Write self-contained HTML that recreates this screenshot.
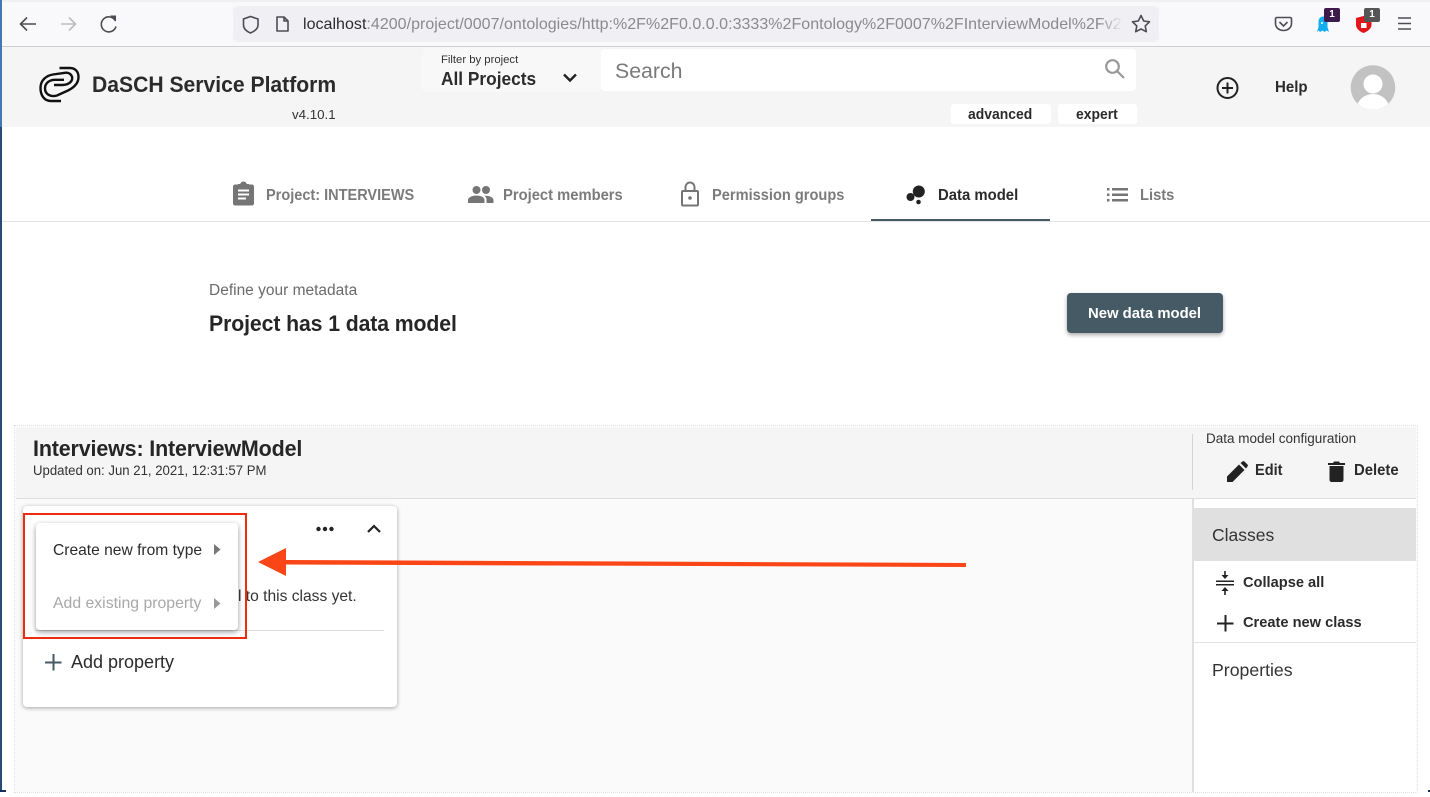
<!DOCTYPE html>
<html>
<head>
<meta charset="utf-8">
<style>
html,body{margin:0;padding:0;width:1430px;height:797px;overflow:hidden;background:#fff;font-family:"Liberation Sans",sans-serif;color:#222}
.a{position:absolute;white-space:nowrap;transform-origin:left center}
svg{position:absolute;overflow:visible}
#root{position:absolute;left:0;top:0;width:1430px;height:797px;overflow:hidden;background:#fff}
.tab{font-size:15.5px;font-weight:700;color:#7b7b7b;line-height:20px}
</style>
</head>
<body>
<div id="root">
<!-- browser chrome -->
<div class="a" style="left:0;top:0;width:1430px;height:46px;background:#f9f9fb;border-bottom:1px solid #cfcfd3"></div>
<div class="a" style="left:0;top:0;width:1430px;height:2px;background:#f0f0f3"></div>
<div class="a" style="left:233px;top:6px;width:926px;height:36px;background:#f0f0f4;border-radius:5px"></div>
<svg style="left:0;top:0" width="1430" height="46" fill="none" stroke="#4c4c52" stroke-width="1.6">
<path d="M36 24H21M27 17.5L20.5 24L27 30.5"/>
<path d="M76 24H61M69 17.5L75.5 24L69 30.5" stroke="#bdbdc1"/>
<path d="M115.500 21A7.500 7.500 0 1 0 116 26.500"/><path d="M110 15.500L116 15.500V21.500Z" fill="#4c4c52" stroke="none"/>
<path d="M250.500 16.500L258 19V25C258 29 254 31.500 250.500 33C247 31.500 243.500 29 243.500 25V19Z"/>
<path d="M277 17H284L288 21V31H277ZM284 17V21H288" stroke-linejoin="round"/>
<path d="M1141 15.500L1143.700 21L1149.500 21.800L1145.200 25.900L1146.300 31.700L1141 29L1135.700 31.700L1136.800 25.900L1132.500 21.800L1138.300 21Z" stroke-linejoin="round"/>
<path d="M1277 17.500H1290C1291 17.500 1291.500 18 1291.500 19V23.500C1291.500 27.500 1288 30.500 1283.500 30.500C1279 30.500 1275.500 27.500 1275.500 23.500V19C1275.500 18 1276 17.500 1277 17.500ZM1279.500 22L1283.500 26L1287.500 22"/>
<path d="M1398 18H1411M1398 23.500H1411M1398 29H1411" stroke-width="1.500"/>
<path d="M1317 32L1318.500 27V22C1318.500 18.500 1320.500 16.500 1323 16.500C1325.500 16.500 1327.500 18.500 1327.500 22V27L1329 32L1326.500 30.500L1324.500 32L1322.500 30.500L1320 32L1318.800 30.500Z" fill="#12aef0" stroke="none"/>
<circle cx="1322" cy="23" r="1" fill="#fff" stroke="none"/>
<path d="M1363.500 16L1371.500 18V25C1371.500 28.500 1367.500 31.500 1363.500 33C1359.500 31.500 1356 28.500 1356 25V18Z" fill="#e2141c" stroke="none"/>
<rect x="1361" y="23" width="5.500" height="5" fill="#fff" stroke="none"/>
</svg>
<div class="a" style="left:1324px;top:8px;width:16px;height:14px;background:#3d1a4c;border-radius:2px;color:#fff;font-size:10px;font-weight:700;text-align:center;line-height:14px">1</div>
<div class="a" style="left:1364px;top:8px;width:16px;height:14px;background:#555;border-radius:2px;color:#fff;font-size:10px;font-weight:700;text-align:center;line-height:14px">1</div>
<div class="a" style="left:303px;top:15px;width:818px;overflow:hidden;font-size:16px;line-height:20px;color:#8a8a8f;letter-spacing:0.03px"><span style="color:#2b2b30">localhost</span>:4200/project/0007/ontologies/http:%2F%2F0.0.0.0:3333%2Fontology%2F0007%2FInterviewModel%2Fv2</div>
<div class="a" style="left:1099px;top:12px;width:24px;height:26px;background:linear-gradient(to right,rgba(240,240,244,0),#f0f0f4)"></div>

<!-- app header -->
<div class="a" style="left:2px;top:47px;width:1428px;height:80px;background:#f5f5f5"></div>
<svg style="left:31px;top:60px" width="60" height="50" viewBox="0 0 60 50" fill="none" stroke="#111" stroke-width="2.400">
<path d="M30 41H20C13 41 9.500 35 9.500 28C9.500 20 15.500 15.500 22 14.500L34 12.800C39 12.200 42 16 41 19.500C40 23 36 25 31 25H23"/>
<path d="M28.500 8H39C44.500 8 47.500 12 47.500 17C47.500 23 43 27.500 37 30.500L26 35.500C19.500 37.500 14 34 14 28.500C14 23 18.500 19.800 24 19.800H33"/>
</svg>
<div class="a" style="left:92px;top:70.500px;font-size:22px;line-height:28px;font-weight:700;color:#2b2b2b;transform:scaleX(.96)">DaSCH Service Platform</div>
<div class="a" style="left:292px;top:107px;font-size:13.300px;line-height:16px;color:#333">v4.10.1</div>

<div class="a" style="left:422px;top:48px;width:180px;height:44px;background:#f8f8f8;border-radius:4px"></div>
<div class="a" style="left:441px;top:53px;font-size:11.300px;line-height:14px;color:#333">Filter by project</div>
<div class="a" style="left:441px;top:68px;font-size:18px;line-height:22px;font-weight:700;color:#2b2b2b;transform:scaleX(.96)">All Projects</div>
<svg style="left:562px;top:72px" width="16" height="12" fill="none" stroke="#222" stroke-width="2.400"><path d="M2 2.500L8 8.500L14 2.500"/></svg>
<div class="a" style="left:601px;top:49px;width:535px;height:42px;background:#fff;border-radius:4px"></div>
<div class="a" style="left:615px;top:58px;font-size:21.300px;line-height:26px;color:#7a7a7a">Search</div>
<svg style="left:1104px;top:58px" width="22" height="22" fill="none" stroke="#999" stroke-width="2.200"><circle cx="8.500" cy="8.500" r="6.300"/><path d="M13 13L20 20"/></svg>
<div class="a" style="left:951px;top:104px;width:100px;height:20px;background:#fff;border-radius:3px"></div>
<div class="a" style="left:968px;top:105px;font-size:14.500px;line-height:20px;font-weight:700;color:#2b2b2b;transform:scaleX(.96)">advanced</div>
<div class="a" style="left:1058px;top:104px;width:79px;height:20px;background:#fff;border-radius:3px"></div>
<div class="a" style="left:1076px;top:105px;font-size:14.500px;line-height:20px;font-weight:700;color:#2b2b2b;transform:scaleX(.96)">expert</div>
<svg style="left:1216px;top:76px" width="24" height="24" fill="none" stroke="#222" stroke-width="2"><circle cx="11.500" cy="12" r="10"/><path d="M11.500 6.500V17.500M6 12H17"/></svg>
<div class="a" style="left:1275px;top:78px;font-size:15.500px;line-height:20px;font-weight:700;color:#2b2b2b;transform:scaleX(.97)">Help</div>
<svg style="left:1350px;top:65px" width="46" height="46" viewBox="0 0 46 46"><defs><clipPath id="c"><circle cx="23" cy="22.500" r="22.300"/></clipPath></defs><circle cx="23" cy="22.500" r="22.300" fill="#c2c2c2"/><g clip-path="url(#c)" fill="#fff"><circle cx="23" cy="19" r="9.500"/><ellipse cx="23" cy="43" rx="16" ry="14"/></g></svg>

<!-- left blue edge -->
<div class="a" style="left:0;top:0;width:1.500px;height:127px;background:#3f78b5"></div>
<div class="a" style="left:0;top:127px;width:1.500px;height:665px;background:#254a78"></div>
<div class="a" style="left:0;top:790px;width:6px;height:2px;background:#14305a"></div>
<div class="a" style="left:1428px;top:790px;width:2px;height:2px;background:#14305a"></div>

<!-- tabs -->
<div class="a" style="left:2px;top:221px;width:1428px;height:1px;background:#e3e3e3"></div>
<svg style="left:232px;top:181px" width="24" height="26" viewBox="0 0 24 26">
<path d="M3 3.500H8C8.500 1.500 10 .5 11.500 .5C13 .5 14.500 1.500 15 3.500H20C21 3.500 22 4.500 22 5.500V22.500C22 23.500 21 24.500 20 24.500H3C2 24.500 1 23.500 1 22.500V5.500C1 4.500 2 3.500 3 3.500Z" fill="#757575"/>
<path d="M6 9.500H17M6 13.500H17M6 17.500H14" stroke="#fff" stroke-width="2"/><rect x="6" y="3" width="11" height="2.500" fill="#757575"/></svg>
<div class="a tab" style="left:266px;top:186px;transform:scaleX(.937)">Project: INTERVIEWS</div>
<svg style="left:468px;top:185px" width="26" height="19" viewBox="0 0 26 19" fill="#757575"><circle cx="8.500" cy="5" r="4"/><circle cx="18" cy="5" r="4"/><path d="M0 18V15C0 12 5 10.500 8.500 10.500C12 10.500 16.500 12 16.500 15V18Z"/><path d="M18.500 18V14.500C18.500 13 17.500 11.500 16.500 10.800C20 10.300 25.500 12 25.500 15V18Z"/></svg>
<div class="a tab" style="left:503px;top:186px;transform:scaleX(.952)">Project members</div>
<svg style="left:680px;top:181px" width="20" height="26" viewBox="0 0 20 26" fill="none" stroke="#757575" stroke-width="2"><rect x="2" y="10" width="16" height="14.500" rx="1"/><path d="M5.500 10V6.500C5.500 3.500 7.500 1.500 10 1.500C12.500 1.500 14.500 3.500 14.500 6.500V10"/><circle cx="10" cy="17" r="1.800" fill="#757575" stroke="none"/></svg>
<div class="a tab" style="left:712px;top:186px;transform:scaleX(.943)">Permission groups</div>
<svg style="left:906px;top:185px" width="20" height="20" fill="#222"><circle cx="12.800" cy="6.500" r="6"/><circle cx="4.500" cy="12" r="4"/><circle cx="12.500" cy="17" r="2.300"/></svg>
<div class="a tab" style="left:938px;top:186px;color:#2b2b2b;transform:scaleX(.96)">Data model</div>
<div class="a" style="left:871px;top:219px;width:179px;height:2px;background:#455a64"></div>
<svg style="left:1107px;top:187px" width="22" height="16" fill="#757575"><rect x="0" y="1" width="2.500" height="2.500"/><rect x="0" y="6.500" width="2.500" height="2.500"/><rect x="0" y="12" width="2.500" height="2.500"/><rect x="5" y="1" width="16" height="2.500"/><rect x="5" y="6.500" width="16" height="2.500"/><rect x="5" y="12" width="16" height="2.500"/></svg>
<div class="a tab" style="left:1140px;top:186px;transform:scaleX(.95)">Lists</div>

<!-- intro -->
<div class="a" style="left:209px;top:281px;font-size:15.500px;line-height:20px;color:#6b6b6b">Define your metadata</div>
<div class="a" style="left:209px;top:309.500px;font-size:22px;line-height:28px;font-weight:700;color:#262626;letter-spacing:-.1px;transform:scaleX(.965)">Project has 1 data model</div>
<div class="a" style="left:1067px;top:293px;width:156px;height:40px;background:#455a64;border-radius:4px;box-shadow:0 2px 4px rgba(0,0,0,.35)"></div>
<div class="a" style="left:1088px;top:304px;color:#fff;font-size:15px;font-weight:700;line-height:20px;transform:scaleX(.99)">New data model</div>

<!-- model panel -->
<div class="a" style="left:15px;top:426px;width:1402px;height:366px;background:#fafafa;outline:1px dotted #e2e2e2"></div>
<div class="a" style="left:16px;top:427px;width:1400px;height:71px;background:#f5f5f5;border-bottom:1px solid #dedede"></div>
<div class="a" style="left:33px;top:434.500px;font-size:22px;line-height:28px;font-weight:700;color:#262626;letter-spacing:-.15px;transform:scaleX(.975)">Interviews: InterviewModel</div>
<div class="a" style="left:33px;top:462px;font-size:13.500px;line-height:17px;color:#333;transform:scaleX(.975)">Updated on: Jun 21, 2021, 12:31:57 PM</div>
<div class="a" style="left:1192px;top:434px;width:1px;height:56px;background:#d4d4d4"></div>
<div class="a" style="left:1206px;top:430px;font-size:13.500px;line-height:17px;color:#333">Data model configuration</div>
<svg style="left:1227px;top:461px" width="22" height="22" fill="#222"><path d="M0 21V15.500L12 3.500L17.500 9L5.500 21Z"/><path d="M13.500 2L15.500 .5C16 0 17 0 17.500 .5L20.500 3.500C21 4 21 5 20.500 5.500L19 7.500Z"/></svg>
<div class="a" style="left:1255px;top:461px;font-size:15.500px;line-height:20px;font-weight:700;color:#2b2b2b;transform:scaleX(.94)">Edit</div>
<svg style="left:1328px;top:461px" width="17" height="21" fill="#222"><path d="M1.500 5H15.500V19C15.500 20 14.500 21 13.500 21H3.500C2.500 21 1.500 20 1.500 19Z"/><path d="M0 2H5L6 .5H11L12 2H17V4H0Z"/></svg>
<div class="a" style="left:1354px;top:461px;font-size:15.500px;line-height:20px;font-weight:700;color:#2b2b2b;transform:scaleX(.96)">Delete</div>

<!-- sidebar -->
<div class="a" style="left:1192px;top:499px;width:2px;height:293px;background:#e0e0e0"></div>
<div class="a" style="left:1194px;top:499px;width:222px;height:293px;background:#fff"></div>
<div class="a" style="left:1194px;top:508px;width:222px;height:53px;background:#e0e0e0"></div>
<div class="a" style="left:1212px;top:524px;font-size:17.500px;line-height:22px;color:#333">Classes</div>
<svg style="left:1216px;top:571px" width="19" height="24" fill="#222"><path d="M0 9.500H18V11H0ZM0 13H18V14.500H0Z"/><path d="M8.200 0H9.800V4H12.500L9 8L5.500 4H8.200ZM8.200 24H9.800V20H12.500L9 16L5.500 20H8.200Z"/></svg>
<div class="a" style="left:1243px;top:573px;font-size:15px;line-height:20px;font-weight:700;color:#2b2b2b;transform:scaleX(.975)">Collapse all</div>
<svg style="left:1217px;top:615px" width="17" height="17" stroke="#222" stroke-width="2"><path d="M8.500 0V16.500M0 8.500H16.500"/></svg>
<div class="a" style="left:1243px;top:613px;font-size:15px;line-height:20px;font-weight:700;color:#2b2b2b;transform:scaleX(.975)">Create new class</div>
<div class="a" style="left:1194px;top:642px;width:222px;height:1px;background:#e3e3e3"></div>
<div class="a" style="left:1212px;top:659px;font-size:17.700px;line-height:22px;color:#333">Properties</div>

<!-- class card -->
<div class="a" style="left:23px;top:506px;width:374px;height:201px;background:#fff;border-radius:4px;box-shadow:0 1px 4px rgba(0,0,0,.35)"></div>
<svg style="left:316px;top:526px" width="18" height="6" fill="#222"><circle cx="2.500" cy="3" r="2.200"/><circle cx="9" cy="3" r="2.200"/><circle cx="15.500" cy="3" r="2.200"/></svg>
<svg style="left:367px;top:524px" width="14" height="10" fill="none" stroke="#222" stroke-width="2.200"><path d="M1 8L7 2L13 8"/></svg>
<div class="a" style="left:238px;top:587px;font-size:15.600px;line-height:20px;color:#333">l to this class yet.</div>
<div class="a" style="left:35px;top:630px;width:349px;height:1px;background:#dedede"></div>
<svg style="left:45px;top:654px" width="17" height="17" stroke="#455a64" stroke-width="2"><path d="M8.500 0V16.500M0 8.500H16.500"/></svg>
<div class="a" style="left:71px;top:651px;font-size:18px;line-height:23px;color:#2b2b2b">Add property</div>

<!-- menu -->
<div class="a" style="left:36px;top:523px;width:202px;height:107px;background:#fff;border-radius:4px;box-shadow:0 2px 6px rgba(0,0,0,.4)"></div>
<div class="a" style="left:53px;top:541px;font-size:15.600px;line-height:20px;color:#2b2b2b">Create new from type</div>
<svg style="left:214px;top:544px" width="7" height="11" fill="#777"><path d="M0 0L6.500 5.500L0 11Z"/></svg>
<div class="a" style="left:53px;top:594px;font-size:15.800px;line-height:20px;color:#a8a8a8">Add existing property</div>
<svg style="left:214px;top:598px" width="7" height="11" fill="#999"><path d="M0 0L6.500 5.500L0 11Z"/></svg>

<!-- annotation -->
<div class="a" style="left:23px;top:513px;width:220px;height:122px;border:2.500px solid #ee2c10"></div>
<svg style="left:0;top:0" width="1430" height="797"><path d="M258 562L286 548V560L966 563V567L286 564.500V576Z" fill="#fa4616"/></svg>
</div>
</body>
</html>
